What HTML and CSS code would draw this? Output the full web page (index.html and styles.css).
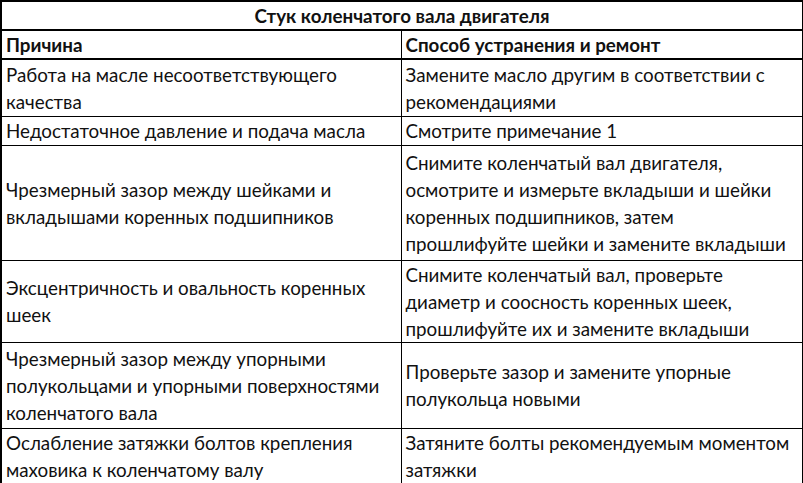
FILE: index.html
```html
<!DOCTYPE html>
<html lang="ru">
<head>
<meta charset="utf-8">
<link rel="stylesheet" href="styles.css">
</head>
<body>
<table class="grid">
  <colgroup><col class="c1"><col class="c2"></colgroup>
  <tr class="r-title"><th colspan="2" class="title">Стук коленчатого вала двигателя</th></tr>
  <tr class="r-head"><th>Причина</th><th>Способ устранения и ремонт</th></tr>
  <tr class="r1"><td>Работа на масле несоответствующего<br>качества</td><td>Замените масло другим в соответствии с<br>рекомендациями</td></tr>
  <tr class="r2"><td>Недостаточное давление и подача масла</td><td>Смотрите примечание 1</td></tr>
  <tr class="r3"><td>Чрезмерный зазор между шейками и<br>вкладышами коренных подшипников</td><td>Снимите коленчатый вал двигателя,<br>осмотрите и измерьте вкладыши и шейки<br>коренных подшипников, затем<br>прошлифуйте шейки и замените вкладыши</td></tr>
  <tr class="r4"><td>Эксцентричность и овальность коренных<br>шеек</td><td>Снимите коленчатый вал, проверьте<br>диаметр и соосность коренных шеек,<br>прошлифуйте их и замените вкладыши</td></tr>
  <tr class="r5"><td>Чрезмерный зазор между упорными<br>полукольцами и упорными поверхностями<br>коленчатого вала</td><td>Проверьте зазор и замените упорные<br>полукольца новыми</td></tr>
  <tr class="r6"><td>Ослабление затяжки болтов крепления<br>маховика к коленчатому валу</td><td>Затяните болты рекомендуемым моментом<br>затяжки</td></tr>
</table>
</body>
</html>
```

FILE: styles.css
```css
html, body {
  margin: 0;
  padding: 0;
  background: #fff;
}
body {
  font-family: "Lato", "Liberation Sans", sans-serif;
  font-size: 18.8px;
  color: #111;
}
.grid {
  border-collapse: collapse;
  width: 802px;
  table-layout: fixed;
  border: 2px solid #000;
}
.c1 { width: 400px; }
.c2 { width: 402px; }
.grid th, .grid td {
  border: 1px solid #000;
  padding: 0 4px;
  line-height: 27px;
  text-align: left;
  vertical-align: middle;
  white-space: nowrap;
  overflow: hidden;
}
.grid th { font-weight: 700; }
.grid th.title { text-align: center; border-bottom: 2px solid #000; }
.r-head th { border-bottom: 2px solid #000; }
.r-title { height: 28px; }
.r-head { height: 29px; }
.r1 { height: 57px; }
.r2 { height: 29px; }
.r3 { height: 115px; }
.r4 { height: 82px; }
.r5 { height: 86px; }
.r6 { height: 53px; }
```
